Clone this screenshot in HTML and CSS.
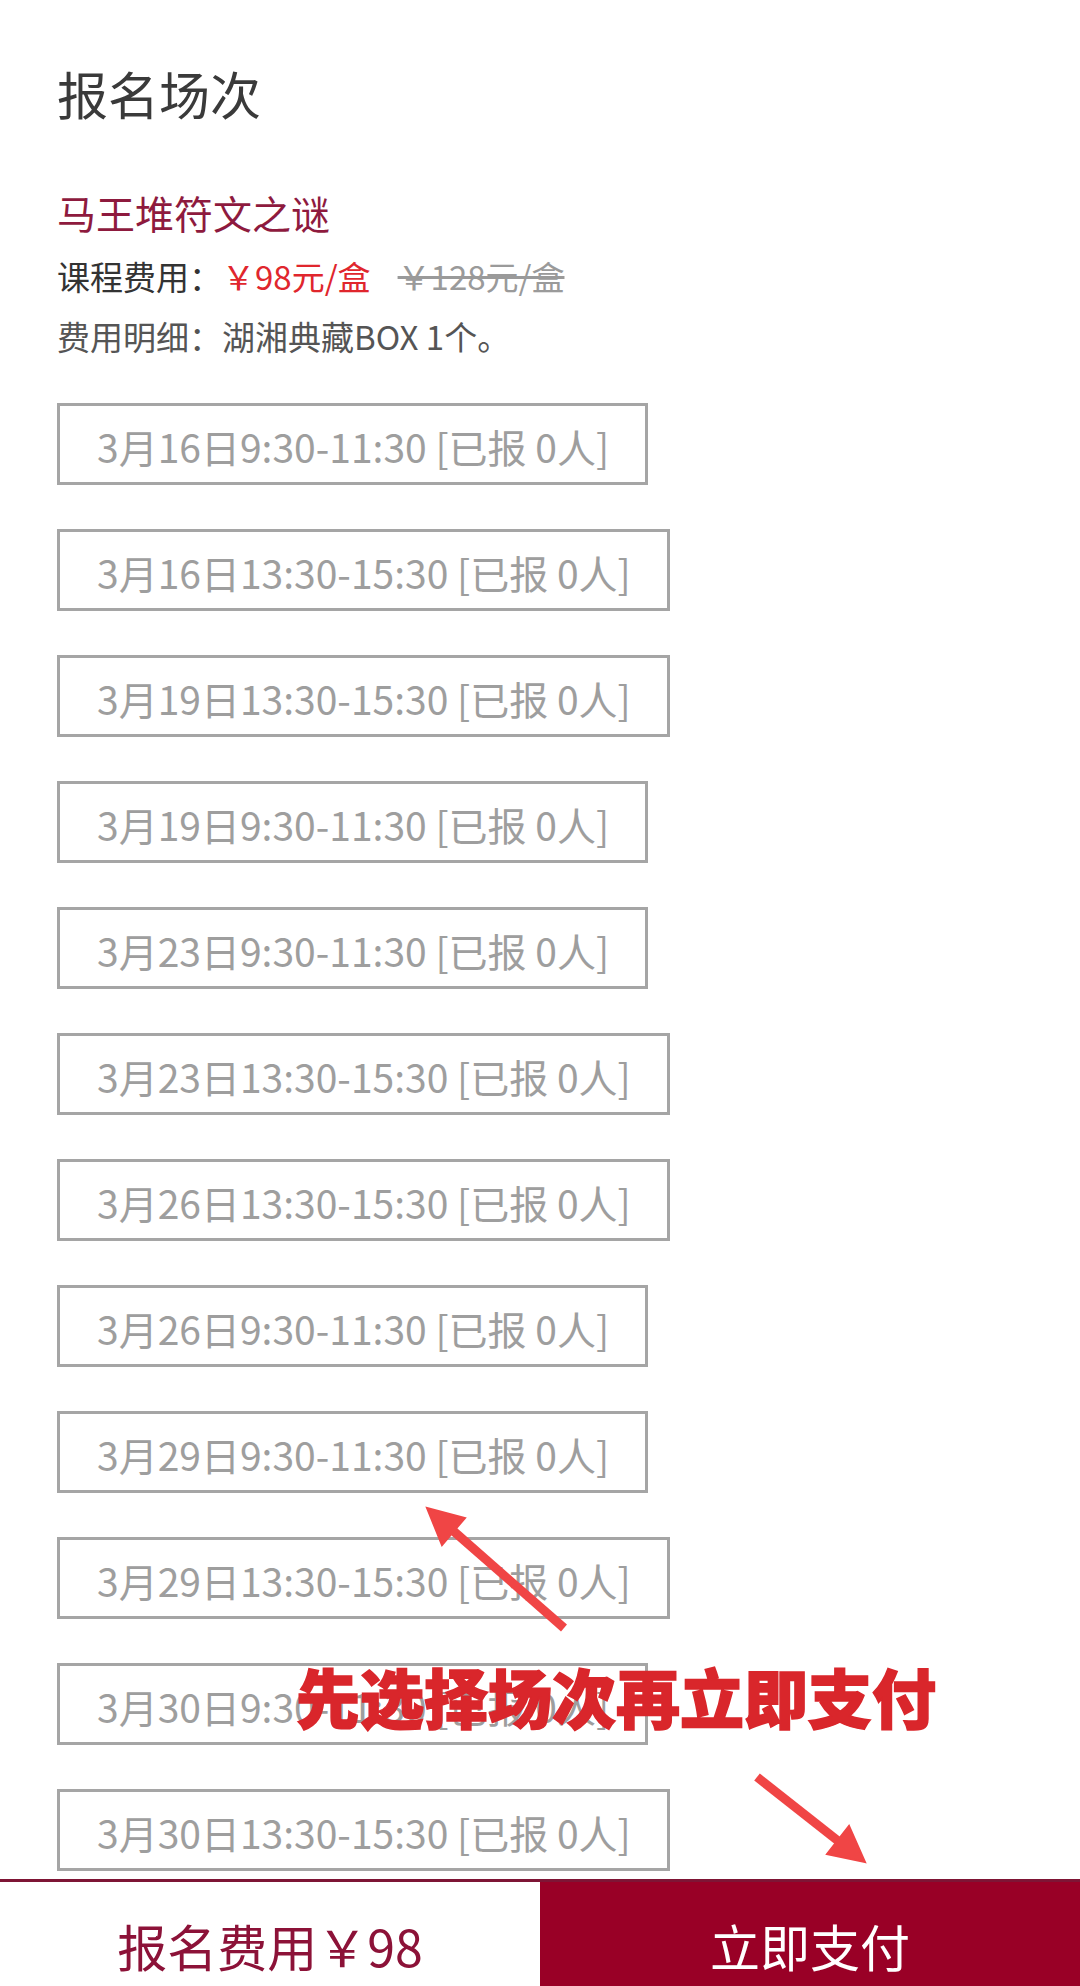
FILE: index.html
```html
<!DOCTYPE html>
<html lang="zh">
<head>
	<meta charset="UTF-8">
	<title>报名场次</title>
	<link rel="stylesheet" href="styles.css">
</head>
<body>
	<div class="page">
		<h2 class="title">报名场次</h2>
		<div class="course">
			<p class="name">马王堆符文之谜</p>
			<p class="fee">课程费用：<span class="now">￥98元/盒</span><span class="old">￥128元/盒</span></p>
			<p class="detail">费用明细：湖湘典藏BOX 1个。</p>
		</div>
		<ul class="sessions">
			<li><span class="slot">3月16日9:30-11:30 [已报 0人]</span></li>
			<li><span class="slot">3月16日13:30-15:30 [已报 0人]</span></li>
			<li><span class="slot">3月19日13:30-15:30 [已报 0人]</span></li>
			<li><span class="slot">3月19日9:30-11:30 [已报 0人]</span></li>
			<li><span class="slot">3月23日9:30-11:30 [已报 0人]</span></li>
			<li><span class="slot">3月23日13:30-15:30 [已报 0人]</span></li>
			<li><span class="slot">3月26日13:30-15:30 [已报 0人]</span></li>
			<li><span class="slot">3月26日9:30-11:30 [已报 0人]</span></li>
			<li><span class="slot">3月29日9:30-11:30 [已报 0人]</span></li>
			<li><span class="slot">3月29日13:30-15:30 [已报 0人]</span></li>
			<li><span class="slot">3月30日9:30-11:30 [已报 0人]</span></li>
			<li><span class="slot">3月30日13:30-15:30 [已报 0人]</span></li>
		</ul>
	</div>

	<!-- 标注：箭头和提示文字 -->
	<svg class="marks" width="1080" height="1986" viewBox="0 0 1080 1986">
		<g fill="#f04545" stroke="#f04545">
			<line x1="564" y1="1628" x2="450" y2="1528" stroke-width="9"/>
			<polygon points="427,1508 465,1518 442,1545" stroke-width="2"/>
			<line x1="757" y1="1777" x2="842" y2="1844" stroke-width="9"/>
			<polygon points="865,1862 827,1854 849,1826" stroke-width="2"/>
		</g>
	</svg>
	<div class="tip">先选择场次再立即支付</div>

	<div class="footer">
		<div class="total">报名费用￥98</div>
		<div class="pay">立即支付</div>
	</div>
</body>
</html>
```
FILE: styles.css
```css
html,body,h2,p,ul,li{margin:0;padding:0;}
body{
	font-family:"Noto Sans CJK SC","Noto Sans",sans-serif;
	background-color:#fff;
	color:#333;
}
.page{padding:58px 0 0 57px;}
.title{
	font-size:51px;
	font-weight:normal;
	line-height:70px;
	color:#3a3a3a;
}
.course{margin-top:50px;}
.name{
	font-size:39px;
	line-height:68px;
	color:#8e1a3e;
}
.fee,.detail{
	font-size:33px;
	line-height:60px;
}
.fee{color:#333;}
.detail{color:#555;}
.now{color:#e0262d;}
.old{
	color:#9a9a9a;
	margin-left:27px;
	text-decoration:line-through;
}
.sessions{margin-top:37px;}
.sessions li{
	list-style:none;
	margin-bottom:44px;
}
.slot{
	display:inline-block;
	border:3px solid #a5a5a5;
	padding:4px 36px 0 37px;
	line-height:72px;
	font-size:39px;
	color:#9e9e9e;
	white-space:nowrap;
}
.marks{
	position:absolute;
	left:0;
	top:0;
	pointer-events:none;
}
.tip{
	position:absolute;
	left:296px;
	top:1663px;
	font-size:64px;
	line-height:64px;
	font-weight:900;
	color:#d9262b;
	-webkit-text-stroke:1.5px #d9262b;
	white-space:nowrap;
}
.footer{
	position:fixed;
	left:0;
	right:0;
	bottom:0;
	display:flex;
	border-top:3px solid #7e1535;
}
.total,.pay{
	flex:1;
	text-align:center;
	font-size:50px;
	padding-top:22px;
	line-height:82px;
}
.total{
	background-color:#fff;
	color:#8c1238;
}
.pay{
	background-color:#990026;
	color:#fff;
}
```
